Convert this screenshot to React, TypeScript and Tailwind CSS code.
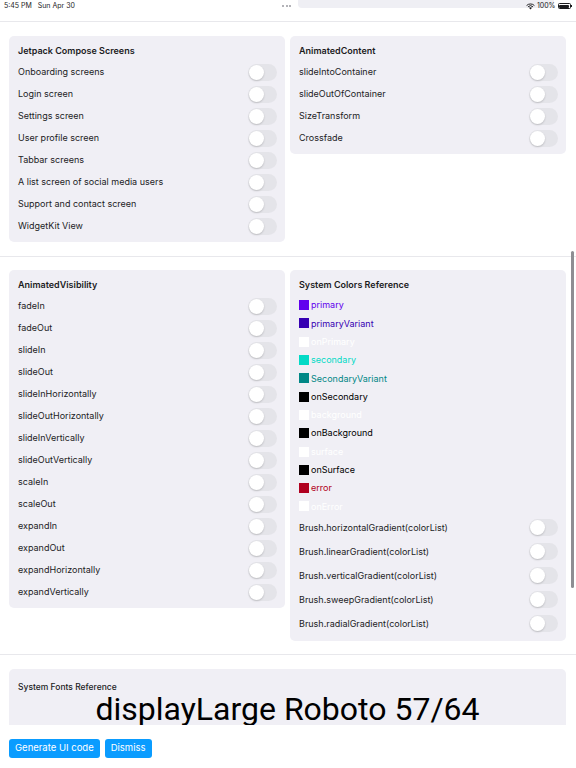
import React from "react";

const font = { fontFamily: "Inter, 'Noto Sans', sans-serif" };

function Toggle() {
  return (
    <div className="relative h-[17px] w-[29px] shrink-0 rounded-full bg-[#e4e4e9]">
      <div className="absolute left-[1px] top-[1px] h-[15px] w-[15px] rounded-full bg-white shadow-[0_1px_2px_rgba(0,0,0,0.18)]" />
    </div>
  );
}

function ToggleRow({ label, h = "h-[22px]" }: { label: string; h?: string }) {
  return (
    <div className={`flex ${h} items-center justify-between pr-[8px]`}>
      <span className="text-[9px] text-[#1c1c1e]">{label}</span>
      <Toggle />
    </div>
  );
}

function Card({ title, children }: { title: string; children: React.ReactNode }) {
  return (
    <div className="rounded-[5px] bg-[#f0eff5] pl-[9px] pt-[5px] pb-[5px]">
      <div className="flex h-[20px] items-center text-[9px] font-semibold text-[#1c1c1e]">{title}</div>
      {children}
    </div>
  );
}

const colors: [string, string][] = [
  ["primary", "#6200EE"],
  ["primaryVariant", "#3700B3"],
  ["onPrimary", "#FFFFFF"],
  ["secondary", "#03DAC6"],
  ["SecondaryVariant", "#018786"],
  ["onSecondary", "#000000"],
  ["background", "#FFFFFF"],
  ["onBackground", "#000000"],
  ["surface", "#FFFFFF"],
  ["onSurface", "#000000"],
  ["error", "#B00020"],
  ["onError", "#FFFFFF"],
];

export default function App() {
  return (
    <div className="relative flex h-[768px] w-[576px] flex-col overflow-hidden bg-white" style={font}>
      {/* status bar */}
      <div className="relative h-[22px] shrink-0 border-b border-[#e8e8ec]">
        <div className="absolute left-[298px] top-0 h-[8px] w-[256px] rounded-b-[4px] bg-[#efeff4]" />
        <div className="absolute left-[282px] top-[5px] flex gap-[1.5px]">
          <div className="h-[2px] w-[2px] rounded-full bg-[#9a9aa0]" />
          <div className="h-[2px] w-[2px] rounded-full bg-[#9a9aa0]" />
          <div className="h-[2px] w-[2px] rounded-full bg-[#9a9aa0]" />
        </div>
        <div className="relative flex h-[12px] items-center justify-between pl-[4px] pr-[4px] text-[7px] text-[#1c1c1e]">
          <span>5:45 PM&nbsp;&nbsp;&nbsp;Sun Apr 30</span>
          <div className="flex items-center gap-[2px]">
            <svg width="9" height="7" viewBox="0 0 12 9">
              <path d="M6 8.5 L8 6.3 A3 3 0 0 0 4 6.3 Z" fill="#1c1c1e" />
              <path d="M2.6 5 A4.8 4.8 0 0 1 9.4 5" stroke="#1c1c1e" strokeWidth="1.3" fill="none" />
              <path d="M0.8 3.2 A7.5 7.5 0 0 1 11.2 3.2" stroke="#1c1c1e" strokeWidth="1.3" fill="none" />
            </svg>
            <span>100%</span>
            <div className="flex items-center">
              <div className="h-[6px] w-[13px] rounded-[1.5px] border border-[#1c1c1e] p-[0.5px]">
                <div className="h-full w-full rounded-[1px] bg-[#1c1c1e]" />
              </div>
              <div className="ml-[0.5px] h-[2px] w-[1px] bg-[#1c1c1e]" />
            </div>
          </div>
        </div>
      </div>

      {/* content */}
      <div className="h-[703px] shrink-0 overflow-hidden">
        <div className="grid grid-cols-2 items-start gap-[5px] pl-[9px] pr-[10px] py-[14px]">
          <Card title="Jetpack Compose Screens">
            {[
              "Onboarding screens",
              "Login screen",
              "Settings screen",
              "User profile screen",
              "Tabbar screens",
              "A list screen of social media users",
              "Support and contact screen",
              "WidgetKit View",
            ].map((l) => (
              <ToggleRow key={l} label={l} />
            ))}
          </Card>
          <Card title="AnimatedContent">
            {["slideIntoContainer", "slideOutOfContainer", "SizeTransform", "Crossfade"].map((l) => (
              <ToggleRow key={l} label={l} />
            ))}
          </Card>
        </div>
        <div className="grid grid-cols-2 items-start gap-[5px] border-t border-[#e8e8ec] pl-[9px] pr-[10px] pt-[13px] pb-[13px]">
          <Card title="AnimatedVisibility">
            {[
              "fadeIn",
              "fadeOut",
              "slideIn",
              "slideOut",
              "slideInHorizontally",
              "slideOutHorizontally",
              "slideInVertically",
              "slideOutVertically",
              "scaleIn",
              "scaleOut",
              "expandIn",
              "expandOut",
              "expandHorizontally",
              "expandVertically",
            ].map((l) => (
              <ToggleRow key={l} label={l} />
            ))}
          </Card>
          <Card title="System Colors Reference">
            <div className="mt-[1px]">
              {colors.map(([name, c]) => (
                <div key={name} className="flex h-[18.3px] items-center gap-[2px]">
                  <div className="h-[10px] w-[10px]" style={{ backgroundColor: c }} />
                  <span className="text-[9px]" style={{ color: c }}>
                    {name}
                  </span>
                </div>
              ))}
            </div>
            {[
              "Brush.horizontalGradient(colorList)",
              "Brush.linearGradient(colorList)",
              "Brush.verticalGradient(colorList)",
              "Brush.sweepGradient(colorList)",
              "Brush.radialGradient(colorList)",
            ].map((l) => (
              <ToggleRow key={l} label={l} h="h-[24px]" />
            ))}
          </Card>
        </div>
        <div className="border-t border-[#e8e8ec] pl-[9px] pr-[10px] pt-[14px]">
          <div className="rounded-[5px] bg-[#f0eff5] pl-[9px] pr-[9px] pt-[13px] pb-[20px]">
            <div className="flex h-[12px] items-center text-[8.5px] font-medium text-[#1c1c1e]">System Fonts Reference</div>
            <div
              className="text-center text-[32px] leading-[30px] text-black"
              style={{ fontFamily: "Roboto, sans-serif" }}
            >
              displayLarge Roboto 57/64
            </div>
          </div>
        </div>
      </div>

      {/* bottom bar */}
      <div className="flex h-[42px] shrink-0 items-start gap-[5px] bg-white pl-[9px] pt-[14px]">
        <button className="h-[19px] rounded-[3px] bg-[#0a9cff] px-[6px] text-[9.5px] text-white">Generate UI code</button>
        <button className="h-[19px] rounded-[3px] bg-[#0a9cff] px-[6px] text-[9.5px] text-white">Dismiss</button>
      </div>

      {/* scrollbar */}
      <div className="absolute left-[571px] top-[251px] h-[337px] w-[2.5px] rounded-full bg-[#8e8e93]" />
    </div>
  );
}
